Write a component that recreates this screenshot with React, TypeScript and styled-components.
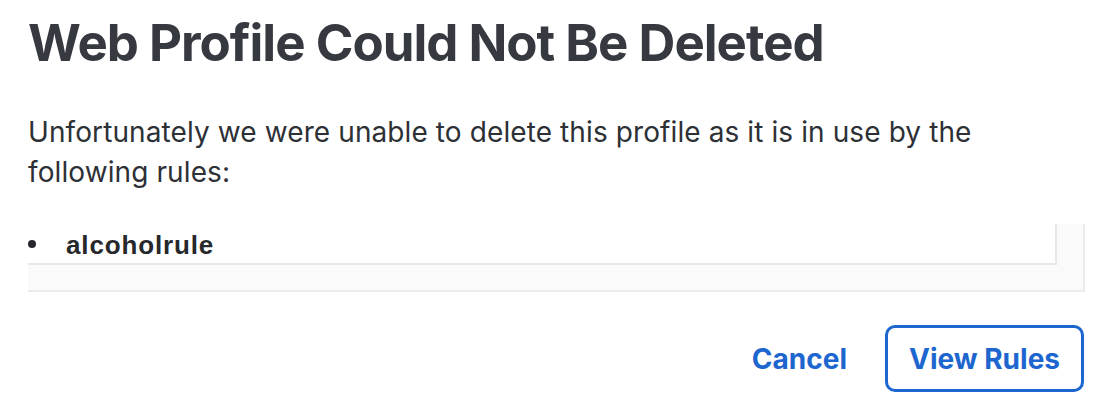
import React, { FunctionComponent } from "react";
import styled, { createGlobalStyle } from "styled-components";

const GlobalStyle = createGlobalStyle`
  html, body {
    margin: 0;
    padding: 0;
    background: #ffffff;
  }
  body {
    font-family: Inter, "Noto Sans", sans-serif;
  }
`;

const Dialog = styled.div`
  width: 1106px;
  box-sizing: border-box;
  padding: 13px 21px 0 28px;
  display: flex;
  flex-direction: column;
`;

const Title = styled.h1`
  margin: 0;
  font-family: Inter, sans-serif;
  font-weight: 700;
  font-size: 51px;
  line-height: 60px;
  color: #363a40;
  letter-spacing: -1px;
`;

const Message = styled.p`
  margin: 39px 0 0;
  font-family: Inter, sans-serif;
  font-weight: 400;
  font-size: 28px;
  line-height: 40px;
  letter-spacing: 0.1px;
  color: #2d3136;
`;

const ScrollArea = styled.div`
  margin-top: 32px;
  height: 66px;
  background: #fafafa;
  border-right: 2px solid #ebebeb;
  border-bottom: 2px solid #ebebeb;
  padding-right: 26px;
`;

const RuleList = styled.ul`
  margin: 0;
  padding: 0;
  list-style: none;
  background: #ffffff;
  border-right: 2px solid #e8e8e8;
  border-bottom: 2px solid #e8e8e8;
`;

const RuleItem = styled.li`
  display: flex;
  align-items: center;
  box-sizing: border-box;
  height: 39px;
  padding-top: 4px;
  font-family: "Liberation Sans", Arial, sans-serif;
  font-weight: 700;
  font-size: 26px;
  letter-spacing: 0.85px;
  color: #26282b;
  line-height: 35px;

  &::before {
    content: "";
    width: 8px;
    height: 8px;
    border-radius: 50%;
    background: #26282b;
    margin: -4px 30px 0 0;
    flex: none;
  }
`;

const Actions = styled.div`
  margin-top: 33px;
  display: flex;
  justify-content: flex-end;
  align-items: center;
  gap: 38px;
  padding-right: 1px;
`;

const ActionButton = styled.button<{ $outlined?: boolean }>`
  font-family: Inter, sans-serif;
  font-weight: 700;
  font-size: 28px;
  color: #1d66cf;
  background: #ffffff;
  cursor: pointer;
  box-sizing: border-box;
  height: 67px;
  line-height: 1;
  border-radius: 10px;
  border: ${(p) => (p.$outlined ? "3px solid #1d66cf" : "none")};
  padding: ${(p) => (p.$outlined ? "0 21px" : "0")};
`;

const App: FunctionComponent = () => (
  <>
    <GlobalStyle />
    <Dialog>
      <Title>Web Profile Could Not Be Deleted</Title>
      <Message>
        Unfortunately we were unable to delete this profile as it is in use by
        the following rules:
      </Message>
      <ScrollArea>
        <RuleList>
          <RuleItem>alcoholrule</RuleItem>
        </RuleList>
      </ScrollArea>
      <Actions>
        <ActionButton>Cancel</ActionButton>
        <ActionButton $outlined>View Rules</ActionButton>
      </Actions>
    </Dialog>
  </>
);

export default App;
